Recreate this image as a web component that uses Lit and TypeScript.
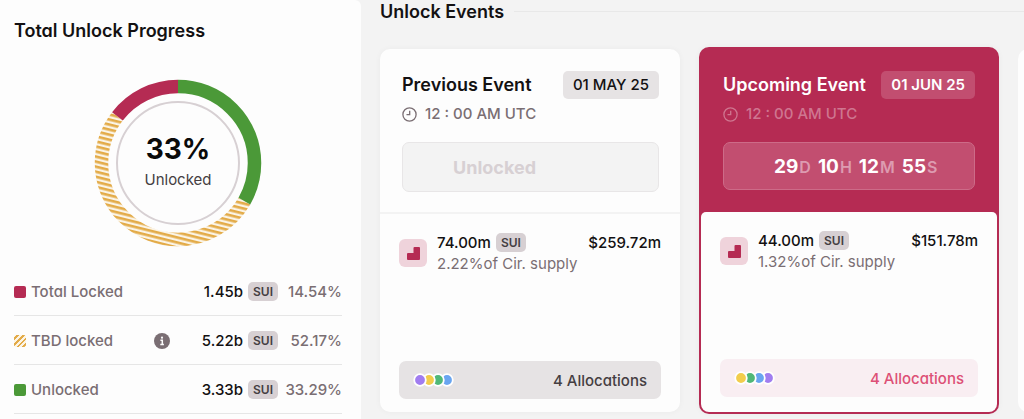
import { LitElement, html, svg, css } from "lit";
import { customElement, property } from "lit/decorators.js";
import { classMap } from "lit/directives/class-map.js";

const base = css`
  * { box-sizing: border-box; }
  h2, h3 { margin: 0; padding: 0; }
  button { font: inherit; font-feature-settings: inherit; cursor: pointer; }
  .token {
    display: inline-block;
    padding: 0 5px;
    border-radius: 5px;
    background: #d7d0d3;
    color: #453e42;
    font-size: 12px;
    line-height: 19px;
    font-weight: 600;
  }
`;

interface Share {
  kind: string;
  label: string;
  amount: string;
  percent: number;
  info?: boolean;
}

interface UnlockEvent {
  title: string;
  date: string;
  time: string;
  countdown?: [string, string][];
  amount: string;
  supply: string;
  value: string;
  dots: string[];
  upcoming?: boolean;
}

const shares: Share[] = [
  { kind: "locked", label: "Total Locked", amount: "1.45b", percent: 14.54 },
  { kind: "tbd", label: "TBD locked", amount: "5.22b", percent: 52.17, info: true },
  { kind: "unlocked", label: "Unlocked", amount: "3.33b", percent: 33.29 },
];

const violet = "#a17df0", yellow = "#f2cd4c", green = "#50b878", blue = "#69a5f0";

const events: UnlockEvent[] = [
  {
    title: "Previous Event", date: "01 MAY 25", time: "12 : 00 AM UTC",
    amount: "74.00m", supply: "2.22%of Cir. supply", value: "$259.72m",
    dots: [violet, yellow, green, blue],
  },
  {
    title: "Upcoming Event", date: "01 JUN 25", time: "12 : 00 AM UTC",
    countdown: [["29", "D"], ["10", "H"], ["12", "M"], ["55", "S"]],
    amount: "44.00m", supply: "1.32%of Cir. supply", value: "$151.78m",
    dots: [yellow, green, blue, violet], upcoming: true,
  },
];

@customElement("unlock-donut")
export class UnlockDonut extends LitElement {
  static styles = css`
    svg { display: block; width: 168px; height: 168px; margin: 0 auto; }
    .arc { fill: none; stroke-width: 13.5; }
    .figure { font-size: 28px; font-weight: 700; fill: #0a0a0a; text-anchor: middle; }
    .caption { font-size: 15px; fill: #453e42; text-anchor: middle; }
  `;

  render() {
    const arc = (color: string, length: number, from: number) => svg`
      <circle class="arc" cx="84" cy="84" r="76.5" pathLength="100" stroke=${color}
        stroke-dasharray="${length} ${100 - length}" stroke-dashoffset=${-from}
        transform="rotate(-90 84 84)"></circle>`;
    return html`
      <svg viewBox="0 0 168 168" role="img" aria-label="33% unlocked">
        <defs>
          <pattern id="stripes" width="20" height="4.9" patternUnits="userSpaceOnUse" patternTransform="rotate(14)">
            <rect width="20" height="4.9" fill="#fbf4e6"></rect>
            <rect width="20" height="2.6" fill="#e3ab48"></rect>
          </pattern>
          <mask id="middle" maskUnits="userSpaceOnUse" x="0" y="0" width="168" height="168">
            ${arc("#fff", 52.17, 33.29)}
          </mask>
        </defs>
        <rect width="168" height="168" fill="url(#stripes)" mask="url(#middle)"></rect>
        ${arc("#4b9938", 33.29, 0)}
        ${arc("#b52b53", 14.54, 85.46)}
        <circle cx="84" cy="84" r="61" fill="none" stroke="#d7d0d3" stroke-width="2"></circle>
        <text class="figure" x="84" y="80">33%</text>
        <text class="caption" x="84" y="106">Unlocked</text>
      </svg>
    `;
  }
}

@customElement("unlock-progress")
export class UnlockProgress extends LitElement {
  static styles = [base, css`
    :host { display: block; background: #fdfdfd; border-top-right-radius: 6px; padding: 19px 19px 0 14px; }
    h2 { font-size: 18px; line-height: 24px; font-weight: 600; color: #131112; }
    unlock-donut { display: block; margin: 36px 0 20px; }
    .row {
      display: flex; align-items: center; height: 49px; padding-top: 1px;
      border-bottom: 1px solid #e6e6e6; font-size: 15px; font-weight: 500;
    }
    .swatch { width: 12px; height: 12px; border-radius: 2px; margin-right: 5px; }
    .locked { background: #b52b53; }
    .unlocked { background: #4b9938; }
    .tbd { background: repeating-linear-gradient(135deg, #fbf4e6 0 2px, #e3ab48 2px 4px); }
    .label { flex: 1; color: #7a6e73; }
    .info { border: 0; padding: 0; background: none; display: block; height: 16px; margin-right: 32px; }
    .info svg { display: block; }
    .amount { color: #131112; margin-right: 5px; }
    .percent { width: 64px; text-align: right; color: #7a6e73; }
  `];

  render() {
    return html`
      <h2>Total Unlock Progress</h2>
      <unlock-donut></unlock-donut>
      ${shares.map((s) => html`
        <div class="row">
          <span class="swatch ${s.kind}"></span>
          <span class="label">${s.label}</span>
          ${s.info ? html`
            <button class="info" aria-label="About TBD locked">
              <svg width="16" height="16" viewBox="0 0 16 16">
                <circle cx="8" cy="8" r="8" fill="#7a6e73"></circle>
                <circle cx="8" cy="4.7" r="1.1" fill="#fdfdfd"></circle>
                <path d="M6.4 7.3H8.3V11.2M6.3 11.4H9.9" fill="none" stroke="#fdfdfd" stroke-width="1.5"></path>
              </svg>
            </button>` : ""}
          <span class="amount">${s.amount}</span>
          <span class="token">SUI</span>
          <span class="percent">${s.percent}%</span>
        </div>`)}
    `;
  }
}

@customElement("event-card")
export class EventCard extends LitElement {
  @property({ attribute: false }) event!: UnlockEvent;

  static styles = [base, css`
    :host { display: block; }
    .card { border-radius: 10px; background: #fdfdfd; box-shadow: 0 0 6px #0000000a; font-size: 15px; font-weight: 500; white-space: nowrap; }
    .head { height: 165px; padding: 22px 21px 0 22px; border-bottom: 2px solid #f3f3f3; }
    .top { display: flex; justify-content: space-between; align-items: center; }
    h3 { font-size: 18px; line-height: 24px; font-weight: 600; color: #131112; }
    .date { padding: 0 10px; border-radius: 5px; background: #e6e3e4; color: #131112; line-height: 28px; }
    .time { display: flex; align-items: center; gap: 8px; color: #7a6e73; line-height: 20px; margin-top: 5px; }
    .time svg { display: block; }
    .state {
      display: flex; align-items: center; height: 50px; margin-top: 18px; padding-left: 50px;
      border: 1px solid #e8e6e7; border-radius: 7px; background: #f3f3f3;
      color: #d7d0d3; font-size: 18px; font-weight: 700;
    }
    .body { padding: 18px 19px 13px; }
    .line { display: flex; align-items: flex-start; height: 129px; line-height: 21px; color: #131112; }
    .mark { width: 28px; height: 28px; margin: 7px 10px 0 0; display: block; }
    .amount { display: flex; align-items: center; gap: 5px; }
    .detail { flex: 1; }
    .supply { color: #7a6e73; font-weight: 400; }
    .allocations {
      display: flex; width: 100%; height: 38px; align-items: center; justify-content: space-between;
      padding: 0 14px; border: 0; border-radius: 7px; background: #e6e3e4; color: #453e42;
    }
    .allocations svg { display: block; }
    .upcoming { background: #b52b53; padding: 2px; }
    .upcoming .head { height: 163px; border: 0; padding-right: 22px; }
    .upcoming h3 { color: #fff; }
    .upcoming .date { background: #c24e70; color: #fff; font-weight: 600; }
    .upcoming .time { color: #cf7690; }
    .upcoming .state { background: #c24e70; border-color: #cd6b88; height: 48px; color: #fff; font-size: 19px; gap: 7px; }
    .unit { color: #dd9bb0; font-size: 16px; font-weight: 600; margin-left: 1px; }
    .upcoming .body { background: #fdfdfd; border-radius: 5px 5px 8px 8px; padding-bottom: 15px; }
    .upcoming .allocations { background: #f9eef2; color: #dd5076; }
  `];

  render() {
    const e = this.event;
    return html`
      <article class=${classMap({ card: true, upcoming: !!e.upcoming })}>
        <div class="head">
          <div class="top"><h3>${e.title}</h3><time class="date">${e.date}</time></div>
          <div class="time">
            <svg width="15" height="15" viewBox="0 0 15 15" fill="none" stroke="currentColor" stroke-width="1.3">
              <circle cx="7.5" cy="7.5" r="6.6"></circle>
              <path d="M7.7 3.8V7.7H4.5"></path>
            </svg>
            <span>${e.time}</span>
          </div>
          <div class="state">
            ${e.countdown
              ? e.countdown.map(([n, u]) => html`<span>${n}<span class="unit">${u}</span></span>`)
              : "Unlocked"}
          </div>
        </div>
        <div class="body">
          <div class="line">
            <svg class="mark" viewBox="0 0 28 28">
              <rect width="28" height="28" rx="6" fill="#efd3db"></rect>
              <path d="M9 14h5.5V9q0-1 1-1H20q1 0 1 1V20q0 1-1 1H9q-1 0-1-1V15q0-1 1-1z" fill="#b52b53"></path>
            </svg>
            <div class="detail">
              <div class="amount">${e.amount}<span class="token">SUI</span></div>
              <div class="supply">${e.supply}</div>
            </div>
            <span>${e.value}</span>
          </div>
          <button class="allocations">
            <svg width="42" height="14" viewBox="0 0 42 14">
              ${e.dots.map((_, i) => {
                const n = e.dots.length - 1 - i;
                return svg`<circle cx=${7 + n * 9} cy="7" r="5.8" fill=${e.dots[n]} stroke="#fff" stroke-width="1.8"></circle>`;
              })}
            </svg>
            <span>4 Allocations</span>
          </button>
        </div>
      </article>
    `;
  }
}

@customElement("app-root")
export class AppRoot extends LitElement {
  static styles = [base, css`
    :host {
      display: grid; grid-template-columns: 361px minmax(0, 1fr);
      min-height: 100vh; overflow: hidden; background: #f3f3f3;
      font-family: Inter, "Noto Sans", sans-serif; font-feature-settings: "cv11";
    }
    .events { padding-left: 19px; min-width: 0; overflow: hidden; }
    .title { display: flex; align-items: center; gap: 10px; height: 23px; }
    .title h2 { font-size: 18px; line-height: 23px; font-weight: 600; color: #131112; }
    .rule { flex: 1; height: 1px; background: #e8e8e8; }
    .track { display: flex; gap: 19px; align-items: flex-start; padding-top: 24px; }
    event-card { flex: 0 0 300px; }
    .plain { margin-top: 2px; }
    .next { flex: 0 0 300px; height: 363px; margin-top: 2px; border-radius: 10px; background: #fdfdfd; }
  `];

  render() {
    return html`
      <unlock-progress></unlock-progress>
      <section class="events">
        <div class="title"><h2>Unlock Events</h2><span class="rule"></span></div>
        <div class="track">
          ${events.map((e) => html`<event-card class=${e.upcoming ? "" : "plain"} .event=${e}></event-card>`)}
          <div class="next"></div>
        </div>
      </section>
    `;
  }
}
